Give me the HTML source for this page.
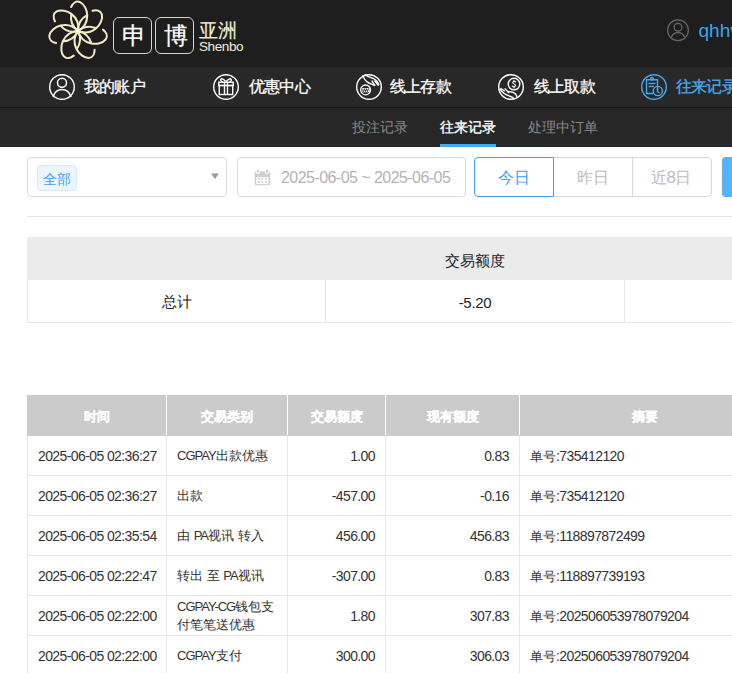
<!DOCTYPE html>
<html><head><meta charset="utf-8">
<style>
*{box-sizing:border-box;margin:0;padding:0}
html,body{width:732px;height:673px;overflow:hidden;background:#fff}
body{position:relative;font-family:"Liberation Sans",sans-serif;color:#333}
.abs{position:absolute}
#hdr{left:0;top:0;width:732px;height:67px;background:#1e1e1e}
#nav{left:0;top:67px;width:732px;height:40px;background:#282828}
#navline{left:0;top:107px;width:732px;height:1px;background:#151515}
#sub{left:0;top:108px;width:732px;height:39px;background:#272727}
.nv{position:absolute;top:79px;font-size:16px;letter-spacing:-0.6px;font-weight:normal;-webkit-text-stroke:0.3px currentColor;color:#fff;line-height:16px;white-space:nowrap}
.sb{position:absolute;top:120px;font-size:14px;color:#8a8a8a;line-height:14px;white-space:nowrap}
.box{position:absolute;border:1px solid #d9d9d9;border-radius:4px;background:#fff}
table{border-collapse:collapse;table-layout:fixed}
#sum{position:absolute;left:27px;top:237px;width:897px}
#sum th{background:#ebebeb;height:43px;padding-top:5px;font-weight:normal;font-size:15px;color:#222}
#sum th:first-child{border-left:1px solid #ebebeb}
#sum td{height:42px;padding-top:3px;border:1px solid #e6e6e6;border-top:none;font-size:15px;text-align:center;color:#222}
#main{position:absolute;left:27px;top:395px;width:900px}
#main th{background:#cbcbcb;color:#fff;font-size:13px;font-weight:bold;-webkit-text-stroke:0.2px #fff;height:40px;padding-top:5px;border-left:1px solid #fff;text-align:center}
#main th{border-bottom:1px solid #cbcbcb;border-top:none}
#main th:first-child{border-left:1px solid #cbcbcb}
#main td{height:40px;border:1px solid #e8e8e8;font-size:13px;color:#333;padding:2px 10px 0 10px;white-space:nowrap;line-height:18px}
#main td.r{text-align:right}
#main td.dt{font-size:14px;letter-spacing:-0.6px}
.n{font-size:14px;letter-spacing:-0.6px}
.l{letter-spacing:-1px}
</style></head><body>
<div id="hdr" class="abs"></div>
<div id="nav" class="abs"></div>
<div id="navline" class="abs"></div>
<div id="sub" class="abs"></div>

<!-- logo flower -->
<svg class="abs" style="left:46px;top:-1px" width="64" height="64" viewBox="-32 -32 64 64">
 <g fill="none" stroke="#f0edc6" stroke-width="2" stroke-linecap="round" transform="scale(1.02)">
  <g transform="rotate(81.50)"><path id="pt" d="M0,0 Q5.5,-9 0,-18 C-2.6,-22.3 -8,-26 -12.5,-25.5 C-16.5,-25 -18,-21 -17.6,-17 M0,0 Q-5.5,-9 0,-18"/></g>
  <use href="#pt" transform="rotate(30.07)"/><use href="#pt" transform="rotate(-21.36)"/><use href="#pt" transform="rotate(-72.79)"/><use href="#pt" transform="rotate(-124.22)"/><use href="#pt" transform="rotate(-175.65)"/><use href="#pt" transform="rotate(-227.08)"/>
 </g>
 <circle cx="0" cy="0" r="2" fill="#f4f4f0"/>
</svg>
<!-- logo boxes -->
<div class="abs" style="left:113px;top:17px;width:39px;height:37px;border:1.5px solid #d9d6c3;border-radius:6px"></div>
<div class="abs" style="left:155px;top:17px;width:39px;height:37px;border:1.5px solid #d9d6c3;border-radius:6px"></div>
<div class="abs" style="left:121.5px;top:23px;font-size:24px;line-height:26px;color:#fff;-webkit-text-stroke:0.25px #fff">申</div>
<div class="abs" style="left:163.5px;top:23px;font-size:24px;line-height:26px;color:#fff;-webkit-text-stroke:0.25px #fff">博</div>
<div class="abs" style="left:198.5px;top:20.5px;font-size:19px;line-height:20px;color:#f2efd8;letter-spacing:0px;-webkit-text-stroke:0.15px #f2efd8">亚洲</div>
<div class="abs" style="left:199px;top:40px;font-size:13.5px;line-height:14px;color:#f2efd8;letter-spacing:-0.4px">Shenbo</div>

<!-- user -->
<svg class="abs" style="left:666px;top:18px" width="24" height="24" viewBox="0 0 24 24">
 <g fill="none" stroke="#6a6a6a" stroke-width="1.2">
 <circle cx="12" cy="12.2" r="10.4"/>
 <circle cx="12" cy="9.2" r="3.9"/>
 <path d="M5.3,19.2 C6.5,16.2 9,14.6 12,14.6 C15,14.6 17.5,16.2 18.7,19.2"/>
 </g>
</svg>
<div class="abs" style="left:698.5px;top:20.5px;font-size:19px;line-height:20px;color:#3aa6ef">qhhv</div>
<!-- nav icons -->
<svg class="abs" style="left:48px;top:73px" width="28" height="28" viewBox="0 0 28 28">
 <circle cx="14" cy="14" r="12.3" fill="none" stroke="#fff" stroke-width="1.4"/>
 <circle cx="14" cy="9.8" r="4.5" fill="none" stroke="#fff" stroke-width="1.5"/>
 <path d="M5,24 C6.5,19 10,16.5 14,16.5 C18,16.5 21.5,19 23,24" fill="none" stroke="#fff" stroke-width="1.5"/>
</svg>
<div class="nv" style="left:83.5px">我的账户</div>

<svg class="abs" style="left:212px;top:73px" width="28" height="28" viewBox="0 0 28 28">
 <g fill="none" stroke="#fff" stroke-width="1.4">
 <circle cx="14" cy="14" r="12.3"/>
 <rect x="6.8" y="9.2" width="14.4" height="3.3"/>
 <rect x="7.3" y="12.5" width="13.4" height="9"/>
 <line x1="12.5" y1="9.2" x2="12.5" y2="21.5"/>
 <line x1="15.5" y1="9.2" x2="15.5" y2="21.5"/>
 <path d="M14,9 C12,6 9.5,5 8.8,6.5 C8.2,8 10,9 11,9"/>
 <path d="M14,9 C16,6 18.5,5 19.2,6.5 C19.8,8 18,9 17,9"/>
 </g>
</svg>
<div class="nv" style="left:248.5px">优惠中心</div>

<svg class="abs" style="left:355px;top:73px" width="28" height="28" viewBox="0 0 28 28">
 <g fill="none" stroke="#fff" stroke-width="1.4" stroke-linecap="round">
 <circle cx="14" cy="14" r="12.3"/>
 <circle cx="10.6" cy="16.9" r="4.9" stroke-width="1.3"/>
 <rect x="7.4" y="15" width="7.2" height="4.3" fill="#fff" stroke="none"/>
 <path d="M8.4,18.6 L9.4,15.7 L10.4,18.6 L11.4,15.7 L12.4,18.6 L13.4,15.7" stroke="#282828" stroke-width="0.9"/>
 <path d="M8,2.6 C9,6 11,8.5 14,10 C16,11 18,11.5 19.5,12.5"/>
 <path d="M10,1.8 C13,3.5 16,4.5 18.5,5.5 C21,6.8 23,9 23.8,11.8"/>
 <path d="M17,8 L19.8,12.3 M19.8,7.8 L23,12"/>
 </g>
</svg>
<div class="nv" style="left:389.5px">线上存款</div>

<svg class="abs" style="left:497px;top:73px" width="28" height="28" viewBox="0 0 28 28">
 <g fill="none" stroke="#fff" stroke-width="1.4" stroke-linecap="round">
 <circle cx="14" cy="14" r="12.3"/>
 <circle cx="17" cy="11.1" r="5.8"/>
 <path d="M18.6,8.9 C17.8,8 15.6,8.2 15.8,9.7 C16,11 18.4,10.8 18.4,12.4 C18.4,13.8 16.2,14.2 15.3,13.2 M17,7.4 L17,8.3 M17,14 L17,14.9" stroke-width="1.1"/>
 <path d="M3,16.2 C5,19 8,21.5 11.5,22.7 C13.5,23.4 16,24 17,25.8"/>
 <path d="M11.5,18.8 C14,18.5 17,19 18.5,21 C19.2,22 19.7,23 19.8,23.5"/>
 <path d="M4,15.5 L7.3,17.8 M8,15.8 C9.5,17 10.5,18.5 11.5,19.5"/>
 </g>
</svg>
<div class="nv" style="left:533.5px">线上取款</div>

<svg class="abs" style="left:640px;top:73px" width="28" height="28" viewBox="0 0 28 28">
 <g fill="none" stroke="#45aaf0" stroke-width="1.4">
 <circle cx="14" cy="14" r="12.3"/>
 <path d="M17.5,17 L17.5,6.8 L6.5,6.8 L6.5,20.5 L13,20.5"/>
 <circle cx="12" cy="5.8" r="1.3"/>
 <line x1="8.5" y1="10.5" x2="15.5" y2="10.5"/>
 <line x1="8.5" y1="13.5" x2="14" y2="13.5"/>
 <circle cx="17.8" cy="18" r="4.6"/>
 <path d="M17.5,15.5 L17.5,18.5 L19.5,20"/>
 </g>
</svg>
<div class="nv" style="left:675.5px;color:#45aaf0">往来记录</div>

<!-- subnav -->
<div class="sb" style="left:352px">投注记录</div>
<div class="sb" style="left:440px;color:#fff;-webkit-text-stroke:0.35px #fff">往来记录</div>
<div class="sb" style="left:528px">处理中订单</div>
<div class="abs" style="left:440px;top:144px;width:56px;height:3px;background:#43abf2"></div>

<!-- filters -->
<div class="box" style="left:27px;top:157px;width:200px;height:40px"></div>
<div class="abs" style="left:37px;top:165px;width:40px;height:26px;background:#ecf5ff;border:1px solid #d9ecff;border-radius:3px"></div>
<div class="abs" style="left:43px;top:171px;font-size:14px;line-height:16px;color:#409eff">全部</div>
<svg class="abs" style="left:210px;top:173px" width="10" height="7" viewBox="0 0 10 7"><path d="M1,0.5 L9,0.5 L5,6 Z" fill="#999"/></svg>

<div class="box" style="left:237px;top:157px;width:229px;height:40px"></div>
<svg class="abs" style="left:254px;top:169px" width="17" height="17" viewBox="0 0 17 17">
 <rect x="0.6" y="2.4" width="15.7" height="13.9" rx="1.4" fill="#cfcfcf"/>
 <rect x="2.2" y="8.1" width="12.3" height="7" fill="#fff"/>
 <rect x="2.1" y="0" width="3.6" height="4.8" rx="1" fill="#fff"/>
 <rect x="11.1" y="0" width="3.6" height="4.8" rx="1" fill="#fff"/>
 <rect x="2.8" y="0.5" width="2.1" height="3.4" rx="0.8" fill="#cfcfcf"/>
 <rect x="11.8" y="0.5" width="2.1" height="3.4" rx="0.8" fill="#cfcfcf"/>
 <g fill="#cfcfcf"><rect x="4.2" y="8.9" width="1.8" height="1.8"/><rect x="7.4" y="8.9" width="1.8" height="1.8"/><rect x="10.9" y="8.9" width="1.8" height="1.8"/><rect x="4.2" y="12.1" width="1.8" height="1.8"/><rect x="7.4" y="12.1" width="1.8" height="1.8"/><rect x="10.9" y="12.1" width="1.8" height="1.8"/></g>
</svg>
<div class="abs" style="left:281px;top:168.5px;font-size:16px;line-height:17px;letter-spacing:-0.55px;color:#b4b4b4;white-space:nowrap">2025-06-05 ~ 2025-06-05</div>

<div class="box" style="left:553px;top:157px;width:159px;height:40px;border-radius:0 4px 4px 0"></div>
<div class="abs" style="left:632px;top:157px;width:1px;height:40px;background:#d9d9d9"></div>
<div class="abs" style="left:474px;top:157px;width:80px;height:40px;border:1px solid #409eff;border-radius:4px 0 0 4px;background:#fff"></div>
<div class="abs" style="left:498px;top:169px;font-size:16px;line-height:18px;color:#409eff">今日</div>
<div class="abs" style="left:576.5px;top:169px;font-size:16px;line-height:18px;color:#bdbdbd">昨日</div>
<div class="abs" style="left:650.5px;top:169px;font-size:16px;line-height:18px;color:#bdbdbd">近<span style="font-size:17px;letter-spacing:-0.5px">8</span>日</div>
<div class="abs" style="left:722px;top:157px;width:40px;height:40px;background:#56b2fa;border-radius:4px"></div>

<div class="abs" style="left:27px;top:216px;width:705px;height:1px;background:#e4e4e4"></div>

<!-- summary -->
<table id="sum">
<colgroup><col style="width:298px"><col style="width:299px"><col style="width:300px"></colgroup>
<tr><th></th><th>交易额度</th><th></th></tr>
<tr><td>总计</td><td><span style="font-size:15px;letter-spacing:-0.3px">-5.20</span></td><td></td></tr>
</table>

<!-- main -->
<table id="main">
<colgroup><col style="width:139px"><col style="width:121px"><col style="width:98px"><col style="width:134px"><col style="width:250px"><col style="width:157px"></colgroup>
<tr><th>时间</th><th>交易类别</th><th>交易额度</th><th>现有额度</th><th>摘要</th><th></th></tr>
<tr><td class="dt">2025-06-05 02:36:27</td><td><span class="l">CGPAY</span>出款优惠</td><td class="r"><span class="n">1.00</span></td><td class="r"><span class="n">0.83</span></td><td>单号<span class="n">:735412120</span></td><td></td></tr>
<tr><td class="dt">2025-06-05 02:36:27</td><td>出款</td><td class="r"><span class="n">-457.00</span></td><td class="r"><span class="n">-0.16</span></td><td>单号<span class="n">:735412120</span></td><td></td></tr>
<tr><td class="dt">2025-06-05 02:35:54</td><td>由 <span class="l">PA</span>视讯 转入</td><td class="r"><span class="n">456.00</span></td><td class="r"><span class="n">456.83</span></td><td>单号<span class="n">:118897872499</span></td><td></td></tr>
<tr><td class="dt">2025-06-05 02:22:47</td><td>转出 至 <span class="l">PA</span>视讯</td><td class="r"><span class="n">-307.00</span></td><td class="r"><span class="n">0.83</span></td><td>单号<span class="n">:118897739193</span></td><td></td></tr>
<tr><td class="dt">2025-06-05 02:22:00</td><td><span class="l">CGPAY-CG</span>钱包支<br>付笔笔送优惠</td><td class="r"><span class="n">1.80</span></td><td class="r"><span class="n">307.83</span></td><td>单号<span class="n">:202506053978079204</span></td><td></td></tr>
<tr><td class="dt">2025-06-05 02:22:00</td><td><span class="l">CGPAY</span>支付</td><td class="r"><span class="n">300.00</span></td><td class="r"><span class="n">306.03</span></td><td>单号<span class="n">:202506053978079204</span></td><td></td></tr>
</table>
</body></html>
